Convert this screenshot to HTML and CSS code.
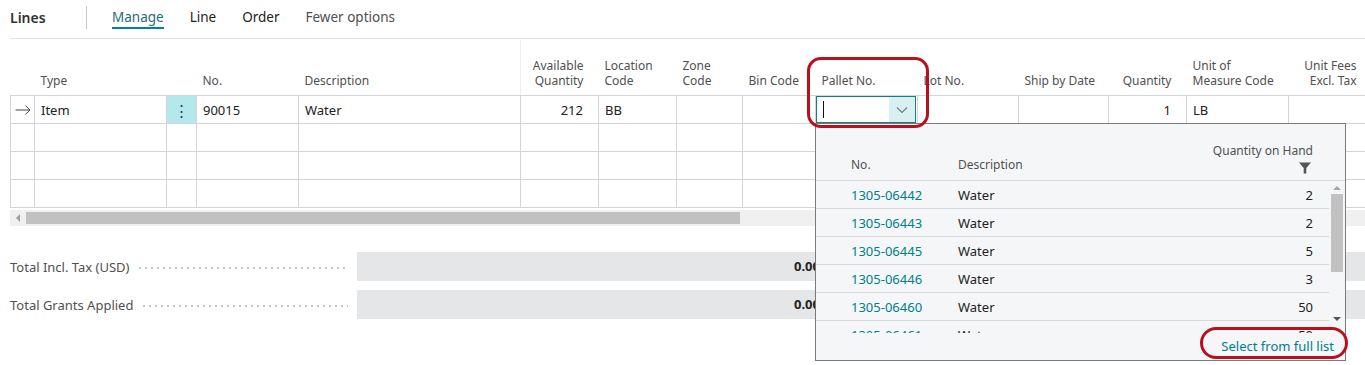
FILE: index.html
```html
<!DOCTYPE html>
<html lang="en">
<head>
  <meta charset="UTF-8" />
  <title>Lines</title>
  <link rel="stylesheet" href="styles.css">
</head>
<body>
  <div class="page">

    <div class="actionbar">
      <span class="title">Lines</span>
      <span class="sep"></span>
      <nav class="tabs">
        <a class="active">Manage</a>
        <a>Line</a>
        <a>Order</a>
        <a class="muted">Fewer options</a>
      </nav>
    </div>

    <div class="grid">
      <table class="lines">
        <colgroup>
          <col style="width:24px"><col style="width:132px"><col style="width:30px"><col style="width:102px">
          <col style="width:222px"><col style="width:78px"><col style="width:78px"><col style="width:66px">
          <col style="width:73px"><col style="width:102px"><col style="width:101px"><col style="width:90px">
          <col style="width:78px"><col style="width:102px"><col style="width:83px"><col style="width:90px">
        </colgroup>
        <thead>
          <tr>
            <th></th>
            <th>Type</th>
            <th></th>
            <th>No.</th>
            <th>Description</th>
            <th class="num frozen">Available<br>Quantity</th>
            <th>Location<br>Code</th>
            <th>Zone<br>Code</th>
            <th>Bin Code</th>
            <th>Pallet No.</th>
            <th>Lot No.</th>
            <th>Ship by Date</th>
            <th class="num">Quantity</th>
            <th>Unit of<br>Measure Code</th>
            <th class="num">Unit Fees<br>Excl. Tax</th>
            <th></th>
          </tr>
        </thead>
        <tbody>
          <tr class="current">
            <td class="arrow">
              <svg width="16" height="10" viewBox="0 0 16 10"><path d="M0.5 5 H15 M10.5 0.7 L15 5 L10.5 9.3" fill="none" stroke="#444" stroke-width="1"/></svg>
            </td>
            <td>Item</td>
            <td class="dots">&#8942;</td>
            <td>90015</td>
            <td>Water</td>
            <td class="num">212</td>
            <td>BB</td>
            <td></td>
            <td></td>
            <td class="edit">
              <div class="combo">
                <span class="caret"></span>
                <span class="chev">
                  <svg width="12" height="8" viewBox="0 0 12 8"><path d="M1 1.5 L6 6.5 L11 1.5" fill="none" stroke="#6b7f82" stroke-width="1.1"/></svg>
                </span>
              </div>
            </td>
            <td></td>
            <td></td>
            <td class="num">1</td>
            <td>LB</td>
            <td></td>
            <td></td>
          </tr>
          <tr><td></td><td></td><td></td><td></td><td></td><td></td><td></td><td></td><td></td><td></td><td></td><td></td><td></td><td></td><td></td><td></td></tr>
          <tr><td></td><td></td><td></td><td></td><td></td><td></td><td></td><td></td><td></td><td></td><td></td><td></td><td></td><td></td><td></td><td></td></tr>
          <tr><td></td><td></td><td></td><td></td><td></td><td></td><td></td><td></td><td></td><td></td><td></td><td></td><td></td><td></td><td></td><td></td></tr>
        </tbody>
      </table>

      <div class="hscroll">
        <span class="hs-left"></span>
        <span class="hs-thumb"></span>
      </div>
    </div>

    <div class="totals">
      <div class="tot-col">
        <div class="tot-row">
          <span class="tot-label">Total Incl. Tax (USD)</span>
          <span class="leader"></span>
          <span class="tot-value">0.00</span>
        </div>
        <div class="tot-row">
          <span class="tot-label">Total Grants Applied</span>
          <span class="leader"></span>
          <span class="tot-value">0.00</span>
        </div>
      </div>
      <div class="tot-col right">
        <div class="tot-row">
          <span class="tot-label">Total Excl. Tax (USD)</span>
          <span class="leader"></span>
          <span class="tot-value"></span>
        </div>
        <div class="tot-row">
          <span class="tot-label">Total Tax (USD)</span>
          <span class="leader"></span>
          <span class="tot-value"></span>
        </div>
      </div>
    </div>

    <!-- lookup dropdown for Pallet No. -->
    <div class="lookup">
      <div class="lk-head">
        <span class="lk-no">No.</span>
        <span class="lk-desc">Description</span>
        <span class="lk-qty">Quantity on Hand
          <svg width="12" height="12" viewBox="0 0 12 12"><path d="M0 0.5 H12 L7.3 6 V11.5 H4.7 V6 Z" fill="#555"/></svg>
        </span>
      </div>
      <div class="lk-body">
        <div class="lk-rows">
          <div class="lk-row"><span class="lk-no link">1305-06442</span><span class="lk-desc">Water</span><span class="lk-qty">2</span></div>
          <div class="lk-row"><span class="lk-no link">1305-06443</span><span class="lk-desc">Water</span><span class="lk-qty">2</span></div>
          <div class="lk-row"><span class="lk-no link">1305-06445</span><span class="lk-desc">Water</span><span class="lk-qty">5</span></div>
          <div class="lk-row"><span class="lk-no link">1305-06446</span><span class="lk-desc">Water</span><span class="lk-qty">3</span></div>
          <div class="lk-row"><span class="lk-no link">1305-06460</span><span class="lk-desc">Water</span><span class="lk-qty">50</span></div>
          <div class="lk-row"><span class="lk-no link">1305-06461</span><span class="lk-desc">Water</span><span class="lk-qty">50</span></div>
        </div>
        <div class="vscroll">
          <span class="vs-up"></span>
          <span class="vs-thumb"></span>
          <span class="vs-down"></span>
        </div>
      </div>
      <div class="lk-foot">
        <a class="link">Select from full list</a>
      </div>
    </div>

    <!-- red annotation outlines -->
    <div class="mark mark-pallet"></div>
    <div class="mark mark-full"></div>

  </div>
</body>
</html>
```

FILE: styles.css
```css
body {
  margin: 0;
  font-family: "Segoe UI", "Noto Sans", sans-serif;
  font-size: 13px;
  color: #212121;
  background: #fff;
  overflow: hidden;
}

.page {
  position: relative;
  padding-left: 10px;
  height: 365px;
}

/* action bar */
.actionbar {
  display: flex;
  align-items: center;
  height: 34px;
  padding-bottom: 4px;
  border-bottom: 1px solid #e1e1e1;
}

.title {
  font-size: 14px;
  font-weight: 600;
  color: #333;
  width: 76px;
}

.sep {
  width: 1px;
  height: 23px;
  background: #c8c8c8;
  margin-right: 25px;
}

.tabs {
  display: flex;
  gap: 26px;
  font-size: 13.5px;
}

.tabs a {
  display: block;
  padding: 3px 0 1px;
  border-bottom: 2px solid transparent;
}

.tabs a.active {
  color: #1e6e74;
  border-bottom-color: #008489;
}

.tabs a.muted {
  color: #505050;
}

/* lines grid */
.grid {
  margin-top: 1px;
  overflow: hidden;
}

.lines {
  border-collapse: collapse;
  table-layout: fixed;
  width: 1451px;
}

.lines th {
  height: 48px;
  padding: 0 6px 7px;
  vertical-align: bottom;
  text-align: left;
  font-weight: normal;
  font-size: 12px;
  line-height: 15px;
  color: #505050;
  border-bottom: 1px solid #d3d5d9;
}

.lines th.frozen {
  border-left: 1px solid #efefef;
}

.lines td {
  height: 27px;
  padding: 0 6px;
  border: 1px solid #d3d5d9;
  border-top: none;
  white-space: nowrap;
}

.lines .num {
  text-align: right;
  padding-right: 15px;
}

.lines td.arrow {
  padding: 0 0 0 4px;
}

.lines td.arrow svg {
  display: block;
}

.lines td.dots {
  background: #b3e8ec;
  text-align: center;
  font-size: 15px;
  color: #333;
  padding: 0;
}

.lines td.edit {
  padding: 0;
}

.combo {
  display: flex;
  justify-content: space-between;
  height: 25px;
  margin-right: 1px;
  border: 1px solid #0e7f86;
  background: #fff;
}

.caret {
  width: 1px;
  height: 17px;
  margin: 4px 0 0 6px;
  background: #111;
}

.chev {
  display: flex;
  align-items: center;
  justify-content: center;
  width: 26px;
  background: #d9f0f2;
}

.hscroll {
  display: flex;
  align-items: center;
  height: 16px;
  margin-top: 2px;
  background: #f0f0f0;
}

.hs-left {
  width: 0;
  height: 0;
  margin: 0 6px 0 6px;
  border-top: 4px solid transparent;
  border-bottom: 4px solid transparent;
  border-right: 4px solid #a0a0a0;
}

.hs-thumb {
  width: 714px;
  height: 12px;
  background: #c1c1c1;
}

/* totals */
.totals {
  display: flex;
  margin-top: 26px;
}

.tot-col {
  display: flex;
  flex-direction: column;
  gap: 9px;
  width: 816px;
}

.tot-col.right {
  width: auto;
  flex: 1;
  margin-left: 20px;
}

.tot-row {
  display: flex;
  align-items: center;
  height: 29px;
}

.tot-label {
  color: #505050;
  font-size: 13px;
  white-space: nowrap;
  margin-right: 8px;
}

.leader {
  flex: 1;
  height: 2px;
  margin-right: 9px;
  background-image: radial-gradient(circle, #c4c4c4 0.7px, transparent 0.9px);
  background-size: 6px 2px;
  margin-top: 3px;
}

.tot-value {
  width: 463px;
  height: 29px;
  line-height: 29px;
  padding-right: 6px;
  text-align: right;
  font-weight: bold;
  background: #e5e6e8;
}

.tot-col.right .tot-value {
  width: 190px;
}

/* lookup dropdown */
.lookup {
  position: absolute;
  left: 815px;
  top: 123px;
  width: 529px;
  height: 236px;
  border: 1px solid #7a7a7a;
  background: #f5f6f8;
  display: flex;
  flex-direction: column;
}

.lookup .lk-no {
  width: 107px;
  padding-left: 35px;
}

.lookup .lk-desc {
  flex: 1;
}

.lookup .lk-qty {
  text-align: right;
  padding-right: 16px;
}

.lk-head {
  display: flex;
  align-items: flex-end;
  height: 50px;
  padding: 0 32px 6px 0;
  border-bottom: 1px solid #d6d8dc;
  font-size: 12px;
  color: #505050;
}

.lk-head .lk-no,
.lk-head .lk-desc {
  padding-bottom: 1px;
}

.lk-head .lk-qty {
  display: flex;
  flex-direction: column;
  align-items: flex-end;
  gap: 3px;
  padding-right: 0;
}

.lk-head .lk-qty svg {
  margin-right: 2px;
}

.lk-body {
  display: flex;
  height: 152px;
  overflow: hidden;
}

.lk-rows {
  flex: 1;
}

.lk-row {
  display: flex;
  align-items: center;
  height: 27px;
  border-bottom: 1px solid #d6d8dc;
  font-size: 13px;
}

.link {
  color: #00808a;
}

.vscroll {
  display: flex;
  flex-direction: column;
  align-items: center;
  width: 16px;
  padding-top: 5px;
}

.vs-up, .vs-down {
  width: 0;
  height: 0;
  border-left: 4px solid transparent;
  border-right: 4px solid transparent;
}

.vs-up {
  border-bottom: 4px solid #a6a6a6;
}

.vs-down {
  border-top: 4px solid #555;
  margin-top: 45px;
}

.vs-thumb {
  width: 12px;
  height: 78px;
  margin-top: 4px;
  background: #c1c1c1;
}

.lk-foot {
  flex: 1;
  display: flex;
  align-items: center;
  justify-content: flex-end;
  padding-right: 11px;
  padding-bottom: 1px;
  font-size: 13px;
}

/* annotation outlines */
.mark {
  position: absolute;
  border: 3px solid #b8111e;
  border-radius: 14px;
}

.mark-pallet {
  left: 807px;
  top: 57px;
  width: 116px;
  height: 65px;
}

.mark-full {
  left: 1200px;
  top: 327px;
  width: 142px;
  height: 26px;
  border-radius: 16px;
}
```
